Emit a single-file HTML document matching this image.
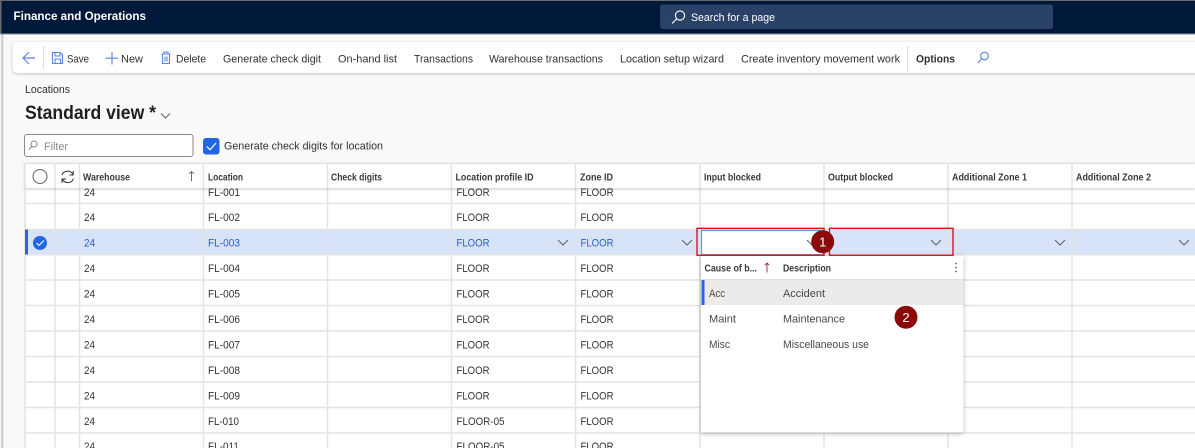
<!DOCTYPE html>
<html><head><meta charset="utf-8"><title>Locations</title>
<style>
html,body{margin:0;padding:0;background:#faf9f8;overflow:hidden}
svg{display:block;filter:blur(.3px)}
text{font-family:"Liberation Sans",sans-serif;font-size:11px;fill:#323130}
.b{font-weight:bold;font-size:10.5px;fill:#3b3a39}
.s{fill:#2b5fc4}
.g{fill:#4a4846}
.l{stroke:#e6e4e2;stroke-width:1.5}
.c{fill:none;stroke:#605e5c;stroke-width:1}
.i{fill:none;stroke:#5b84dc;stroke-width:1.1}
</style></head>
<body>
<svg width="1195" height="448" viewBox="0 0 1195 448" xmlns="http://www.w3.org/2000/svg">
<defs>
<filter id="sh" x="-5%" y="-10%" width="110%" height="130%"><feDropShadow dx="0" dy="1" stdDeviation="1.5" flood-color="#000" flood-opacity=".22"/></filter>
<filter id="sh2" x="-5%" y="-5%" width="110%" height="110%"><feDropShadow dx="0" dy="1" stdDeviation="2" flood-color="#000" flood-opacity=".3"/></filter>
</defs>
<rect width="1195" height="448" fill="#faf9f8"/>
<rect x="1" y="34" width="2.5" height="414" fill="#d4d2d0"/>
<!-- top bar -->
<rect width="1195" height="34" fill="#00183a"/>
<rect width="1195" height="1" fill="#6b6b6b"/>
<rect width="1.5" height="34" fill="#6b6b6b"/>
<rect y="33.5" width="1195" height="1" fill="#8a8f98"/>
<text x="13.5" y="20" textLength="132.5" lengthAdjust="spacingAndGlyphs" style="fill:#fff;font-weight:bold;font-size:12px">Finance and Operations</text>
<rect x="660" y="4.5" width="393" height="24.5" rx="2.5" fill="#2a4268"/>
<circle cx="680" cy="15.5" r="4.6" fill="none" stroke="#fff" stroke-width="1.1"/>
<path d="M676.6 19 L672 23.5" stroke="#fff" stroke-width="1.2" fill="none"/>
<text x="691" y="21" textLength="84" lengthAdjust="spacingAndGlyphs" style="fill:#fff">Search for a page</text>
<!-- toolbar -->
<rect x="12.5" y="42" width="1190" height="31" rx="5" fill="#fff" filter="url(#sh)"/>
<path d="M23.5 58 H35 M29 52 L23 58 L29 64" fill="none" stroke="#5b84dc" stroke-width="1.2"/>
<line x1="43.5" y1="46" x2="43.5" y2="69" stroke="#e1dfdd"/>
<path d="M52.5 52.5 H60 L62.5 55 V63.5 H52.5 Z M55 52.5 V56 H60 V52.5 M55 63.5 V59 H60.5 V63.5" class="i" stroke-width="1.3"/>
<text x="67" y="62.5" textLength="22" lengthAdjust="spacingAndGlyphs">Save</text>
<path d="M112 52 V64.5 M105.5 58.2 H118" class="i" stroke-width="1.2"/>
<text x="121" y="62.5" textLength="22" lengthAdjust="spacingAndGlyphs">New</text>
<path d="M161.5 54 H170.5 M164 54 V52 H168 V54 M162.5 54 V63.5 H169.5 V54 M165 56.5 V61.5 M167 56.5 V61.5" class="i"/>
<text x="176" y="62.5" textLength="30" lengthAdjust="spacingAndGlyphs">Delete</text>
<text x="223" y="62.5" textLength="98" lengthAdjust="spacingAndGlyphs">Generate check digit</text>
<text x="338" y="62.5" textLength="59" lengthAdjust="spacingAndGlyphs">On-hand list</text>
<text x="414" y="62.5" textLength="59" lengthAdjust="spacingAndGlyphs">Transactions</text>
<text x="489" y="62.5" textLength="114" lengthAdjust="spacingAndGlyphs">Warehouse transactions</text>
<text x="620" y="62.5" textLength="104" lengthAdjust="spacingAndGlyphs">Location setup wizard</text>
<text x="741" y="62.5" textLength="159" lengthAdjust="spacingAndGlyphs">Create inventory movement work</text>
<line x1="907.5" y1="46" x2="907.5" y2="72" stroke="#e1dfdd"/>
<text x="916" y="62.5" textLength="39" lengthAdjust="spacingAndGlyphs" style="font-weight:bold">Options</text>
<circle cx="984.5" cy="56" r="3.8" class="i"/>
<path d="M981.6 59 L978 63" class="i"/>
<!-- title -->
<text x="25" y="93" textLength="45" lengthAdjust="spacingAndGlyphs">Locations</text>
<text x="25" y="119" textLength="131" lengthAdjust="spacingAndGlyphs" style="font-size:19px;font-weight:bold;fill:#201f1e">Standard view *</text>
<path d="M161 113.5 L165.5 118 L170 113.5" class="c"/>
<!-- filter -->
<rect x="24.5" y="134.5" width="168.5" height="22" rx="2.5" fill="#fff" stroke="#8a8886"/>
<circle cx="34" cy="144" r="3" fill="none" stroke="#8a8886"/>
<path d="M31.8 146.3 L29 149.5" stroke="#8a8886" fill="none"/>
<text x="44" y="150" textLength="24" lengthAdjust="spacingAndGlyphs" style="fill:#8a8886">Filter</text>
<rect x="203" y="138" width="16.5" height="16.5" rx="3" fill="#2266e3"/>
<path d="M206.8 146.5 L210 149.8 L216 143" stroke="#fff" stroke-width="1.2" fill="none"/>
<text x="224" y="149.5" textLength="159" lengthAdjust="spacingAndGlyphs">Generate check digits for location</text>
<!-- grid -->
<rect x="25" y="163" width="1170" height="285" fill="#fff"/>
<!-- rows text -->
<g class="rows">
<text x="84" y="196" textLength="11" lengthAdjust="spacingAndGlyphs">24</text><text x="208" y="196" textLength="32" lengthAdjust="spacingAndGlyphs">FL-001</text><text x="456.5" y="196" textLength="33" lengthAdjust="spacingAndGlyphs">FLOOR</text><text x="580.5" y="196" textLength="33" lengthAdjust="spacingAndGlyphs">FLOOR</text>
<text x="84" y="221" textLength="11" lengthAdjust="spacingAndGlyphs">24</text><text x="208" y="221" textLength="32" lengthAdjust="spacingAndGlyphs">FL-002</text><text x="456.5" y="221" textLength="33" lengthAdjust="spacingAndGlyphs">FLOOR</text><text x="580.5" y="221" textLength="33" lengthAdjust="spacingAndGlyphs">FLOOR</text>
</g>
<!-- selected -->
<rect x="25" y="229.5" width="1170" height="25" fill="#d7e3f9"/>
<rect x="25" y="229.5" width="3" height="25" fill="#2266e3"/>
<g>
<text x="84" y="272" textLength="11" lengthAdjust="spacingAndGlyphs">24</text><text x="208" y="272" textLength="32" lengthAdjust="spacingAndGlyphs">FL-004</text><text x="456.5" y="272" textLength="33" lengthAdjust="spacingAndGlyphs">FLOOR</text><text x="580.5" y="272" textLength="33" lengthAdjust="spacingAndGlyphs">FLOOR</text>
<text x="84" y="297.5" textLength="11" lengthAdjust="spacingAndGlyphs">24</text><text x="208" y="297.5" textLength="32" lengthAdjust="spacingAndGlyphs">FL-005</text><text x="456.5" y="297.5" textLength="33" lengthAdjust="spacingAndGlyphs">FLOOR</text><text x="580.5" y="297.5" textLength="33" lengthAdjust="spacingAndGlyphs">FLOOR</text>
<text x="84" y="323" textLength="11" lengthAdjust="spacingAndGlyphs">24</text><text x="208" y="323" textLength="32" lengthAdjust="spacingAndGlyphs">FL-006</text><text x="456.5" y="323" textLength="33" lengthAdjust="spacingAndGlyphs">FLOOR</text><text x="580.5" y="323" textLength="33" lengthAdjust="spacingAndGlyphs">FLOOR</text>
<text x="84" y="348.5" textLength="11" lengthAdjust="spacingAndGlyphs">24</text><text x="208" y="348.5" textLength="32" lengthAdjust="spacingAndGlyphs">FL-007</text><text x="456.5" y="348.5" textLength="33" lengthAdjust="spacingAndGlyphs">FLOOR</text><text x="580.5" y="348.5" textLength="33" lengthAdjust="spacingAndGlyphs">FLOOR</text>
<text x="84" y="374" textLength="11" lengthAdjust="spacingAndGlyphs">24</text><text x="208" y="374" textLength="32" lengthAdjust="spacingAndGlyphs">FL-008</text><text x="456.5" y="374" textLength="33" lengthAdjust="spacingAndGlyphs">FLOOR</text><text x="580.5" y="374" textLength="33" lengthAdjust="spacingAndGlyphs">FLOOR</text>
<text x="84" y="399.5" textLength="11" lengthAdjust="spacingAndGlyphs">24</text><text x="208" y="399.5" textLength="32" lengthAdjust="spacingAndGlyphs">FL-009</text><text x="456.5" y="399.5" textLength="33" lengthAdjust="spacingAndGlyphs">FLOOR</text><text x="580.5" y="399.5" textLength="33" lengthAdjust="spacingAndGlyphs">FLOOR</text>
<text x="84" y="425" textLength="11" lengthAdjust="spacingAndGlyphs">24</text><text x="208" y="425" textLength="31" lengthAdjust="spacingAndGlyphs">FL-010</text><text x="456.5" y="425" textLength="48" lengthAdjust="spacingAndGlyphs">FLOOR-05</text><text x="580.5" y="425" textLength="33" lengthAdjust="spacingAndGlyphs">FLOOR</text>
<text x="84" y="450" textLength="11" lengthAdjust="spacingAndGlyphs">24</text><text x="208" y="450" textLength="31" lengthAdjust="spacingAndGlyphs">FL-011</text><text x="456.5" y="450" textLength="48" lengthAdjust="spacingAndGlyphs">FLOOR-05</text><text x="580.5" y="450" textLength="33" lengthAdjust="spacingAndGlyphs">FLOOR</text>
</g>
<!-- lines -->
<g class="l">
<line x1="25" y1="203.5" x2="1195" y2="203.5"/><line x1="25" y1="229.5" x2="1195" y2="229.5"/><line x1="25" y1="254.7" x2="1195" y2="254.7"/><line x1="25" y1="280" x2="1195" y2="280"/><line x1="25" y1="305.5" x2="1195" y2="305.5"/><line x1="25" y1="331" x2="1195" y2="331"/><line x1="25" y1="356.5" x2="1195" y2="356.5"/><line x1="25" y1="382" x2="1195" y2="382"/><line x1="25" y1="407.5" x2="1195" y2="407.5"/><line x1="25" y1="433" x2="1195" y2="433"/>
<line x1="25" y1="163" x2="25" y2="448"/><line x1="55" y1="163" x2="55" y2="448"/><line x1="79.5" y1="163" x2="79.5" y2="448"/><line x1="203.5" y1="163" x2="203.5" y2="448"/><line x1="327.5" y1="163" x2="327.5" y2="448"/><line x1="451.5" y1="163" x2="451.5" y2="448"/><line x1="575.5" y1="163" x2="575.5" y2="448"/><line x1="700" y1="163" x2="700" y2="448"/><line x1="824" y1="163" x2="824" y2="448"/><line x1="948" y1="163" x2="948" y2="448"/><line x1="1072" y1="163" x2="1072" y2="448"/>
</g>
<rect x="25" y="229.5" width="3" height="25" fill="#2266e3"/>
<!-- selected text -->
<circle cx="40" cy="243" r="7" fill="#2266e3"/>
<path d="M36.5 243 L39 245.5 L43.8 240.5" stroke="#fff" stroke-width="1.1" fill="none"/>
<text x="84" y="246.5" textLength="11" lengthAdjust="spacingAndGlyphs" class="s">24</text>
<text x="208" y="246.5" textLength="32" lengthAdjust="spacingAndGlyphs" class="s">FL-003</text>
<text x="456.5" y="246.5" textLength="33" lengthAdjust="spacingAndGlyphs" class="s">FLOOR</text>
<text x="580.5" y="246.5" textLength="33" lengthAdjust="spacingAndGlyphs" class="s">FLOOR</text>
<path d="M558 240 L563 245 L568 240 M682 240 L687 245 L692 240 M931 240 L936 245 L941 240 M1055 240 L1060 245 L1065 240 M1179 240 L1184 245 L1189 240" class="c" stroke-width="1.1"/>
<!-- header -->
<rect x="25" y="163" width="1170" height="25" fill="#fff" filter="url(#sh)"/>
<rect x="25" y="163" width="1170" height="1" fill="#e1dfdd"/>
<g class="l">
<line x1="25" y1="163" x2="25" y2="188"/><line x1="55" y1="163" x2="55" y2="188"/><line x1="79.5" y1="163" x2="79.5" y2="188"/><line x1="203.5" y1="163" x2="203.5" y2="188"/><line x1="327.5" y1="163" x2="327.5" y2="188"/><line x1="451.5" y1="163" x2="451.5" y2="188"/><line x1="575.5" y1="163" x2="575.5" y2="188"/><line x1="700" y1="163" x2="700" y2="188"/><line x1="824" y1="163" x2="824" y2="188"/><line x1="948" y1="163" x2="948" y2="188"/><line x1="1072" y1="163" x2="1072" y2="188"/>
</g>
<circle cx="40" cy="176.5" r="7" class="c"/>
<path d="M62 175 A6 6 0 0 1 73 174.5 M73.2 171 V175 H69.5 M73.5 178.5 A6 6 0 0 1 62.3 179 M62 183 V179 H66" fill="none" stroke="#323130" stroke-width="1"/>
<text class="b" x="83" y="180.5" textLength="47" lengthAdjust="spacingAndGlyphs">Warehouse</text>
<path d="M191.5 181 V171.5 M189.3 173.7 L191.5 171.5 L193.7 173.7" fill="none" stroke="#605e5c" stroke-width=".9"/>
<text class="b" x="208" y="180.5" textLength="35" lengthAdjust="spacingAndGlyphs">Location</text>
<text class="b" x="331" y="180.5" textLength="51" lengthAdjust="spacingAndGlyphs">Check digits</text>
<text class="b" x="455.5" y="180.5" textLength="78" lengthAdjust="spacingAndGlyphs">Location profile ID</text>
<text class="b" x="580" y="180.5" textLength="33" lengthAdjust="spacingAndGlyphs">Zone ID</text>
<text class="b" x="704" y="180.5" textLength="57" lengthAdjust="spacingAndGlyphs">Input blocked</text>
<text class="b" x="828" y="180.5" textLength="65" lengthAdjust="spacingAndGlyphs">Output blocked</text>
<text class="b" x="952" y="180.5" textLength="75" lengthAdjust="spacingAndGlyphs">Additional Zone 1</text>
<text class="b" x="1076" y="180.5" textLength="75" lengthAdjust="spacingAndGlyphs">Additional Zone 2</text>
<!-- dropdown -->
<rect x="701" y="255.5" width="262.5" height="177" fill="#fff" filter="url(#sh2)"/>
<text class="b" x="704.5" y="271.5" textLength="52.5" lengthAdjust="spacingAndGlyphs">Cause of b...</text>
<path d="M767 272.5 V263 M764.8 265.2 L767 263 L769.2 265.2" fill="none" stroke="#a4262c" stroke-width=".9"/>
<text class="b" x="783" y="271.5" textLength="48" lengthAdjust="spacingAndGlyphs">Description</text>
<circle cx="956" cy="263.5" r=".9" fill="#605e5c"/><circle cx="956" cy="267.5" r=".9" fill="#605e5c"/><circle cx="956" cy="271.5" r=".9" fill="#605e5c"/>
<line x1="701" y1="279.5" x2="963.5" y2="279.5" stroke="#e1dfdd"/>
<rect x="701.5" y="280" width="262" height="25" fill="#edebe9"/>
<rect x="701.5" y="280" width="3" height="25" fill="#2266e3"/>
<text class="g" x="709" y="297" textLength="16" lengthAdjust="spacingAndGlyphs">Acc</text>
<text class="g" x="783" y="297" textLength="42" lengthAdjust="spacingAndGlyphs">Accident</text>
<text class="g" x="709" y="322.5" textLength="27" lengthAdjust="spacingAndGlyphs">Maint</text>
<text class="g" x="783" y="322.5" textLength="62" lengthAdjust="spacingAndGlyphs">Maintenance</text>
<text class="g" x="709" y="348" textLength="21" lengthAdjust="spacingAndGlyphs">Misc</text>
<text class="g" x="783" y="348" textLength="86" lengthAdjust="spacingAndGlyphs">Miscellaneous use</text>
<!-- focused input -->
<rect x="701.5" y="230.5" width="122" height="24" fill="#fff" stroke="#6f94dc" stroke-width="1.2"/>
<path d="M807 240 L812 245 L817 240" class="c" stroke-width="1.1"/>
<!-- red boxes -->
<rect x="697" y="228.3" width="127" height="27" fill="none" stroke="#e8101c" stroke-width="1.4"/>
<rect x="829.5" y="228.3" width="123.5" height="27" fill="none" stroke="#e8101c" stroke-width="1.4"/>
<!-- badges -->
<circle cx="822.7" cy="241.7" r="11.5" fill="#8b0a0a"/>
<text x="822.7" y="246.5" text-anchor="middle" style="fill:#fff;font-size:13px">1</text>
<circle cx="906" cy="317.3" r="11.5" fill="#8b0a0a"/>
<text x="906" y="322" text-anchor="middle" style="fill:#fff;font-size:13px">2</text>
</svg>
</body></html>
